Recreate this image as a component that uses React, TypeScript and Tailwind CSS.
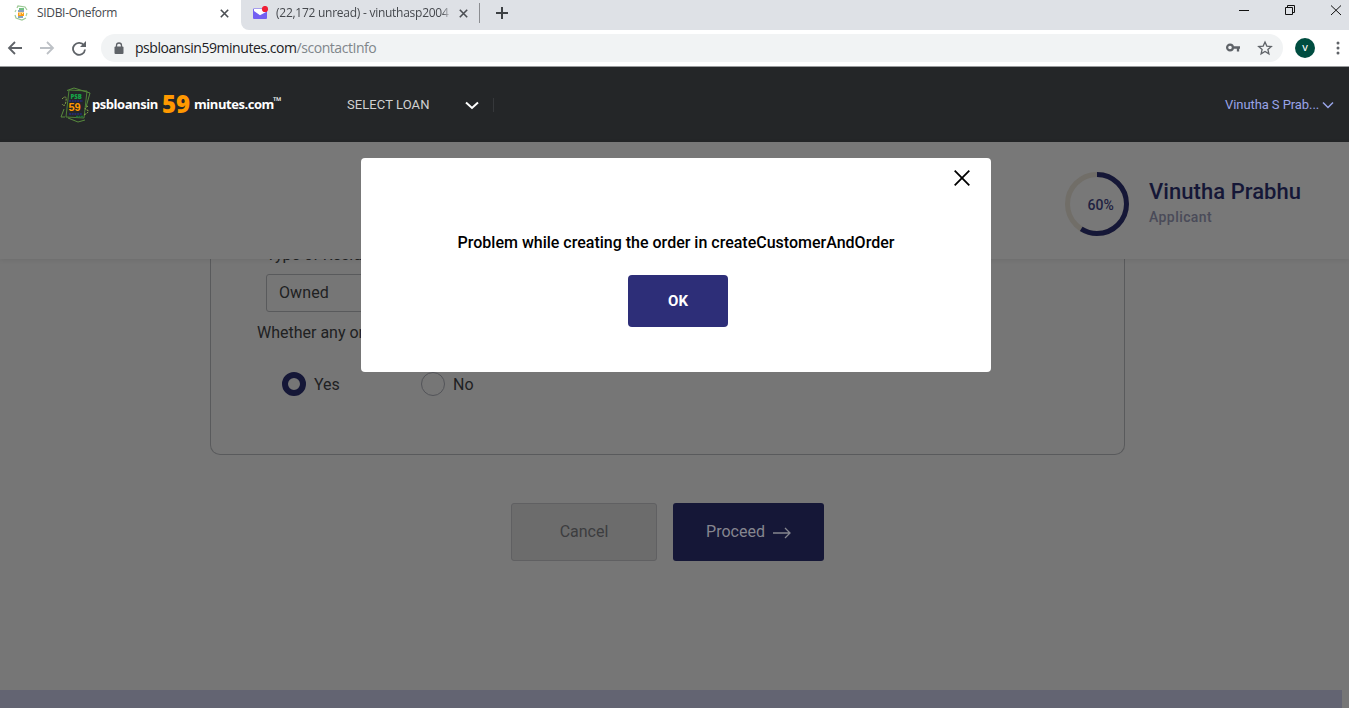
import type { ReactNode } from "react";

const PAGE = "font-['Roboto',sans-serif]";
const CHROME = "font-['Open_Sans','Noto_Sans',sans-serif]";

function NotesIcon({ className }: { className: string }) {
  return (
    <svg viewBox="0 0 32 36" className={className} fill="none">
      <path d="M7 3.500 14 1 30 6 26 20M4 22 1 30 5 30M8 31l10 4 7-2" stroke="#5d963f" strokeWidth=".9" />
      <path d="M9 3 27 4 24 31 6 30Z" stroke="#528a39" strokeWidth=".9" />
      <path d="M2 12q5-5 4 2t-4 3M28 19q-5 3-1 4t-3 5" stroke="#93b64b" strokeDasharray="2 1" />
      <text x="10.500" y="12" fontSize="6" fontWeight="800" fill="#14a447" fontFamily="Open Sans">PSB</text>
      <path d="M9 14h14M9 27h13" stroke="#252a69" strokeWidth="1.800" strokeDasharray="2 .7" />
      <path d="M16 29.500h7" stroke="#196d3b" strokeWidth="1.400" strokeDasharray="2 .5" />
      <text x="8.500" y="24" fontSize="11" fontWeight="700" fill="#ff9800" fontFamily="Liberation Sans">59</text>
    </svg>
  );
}

function SmallFavicon() {
  return (
    <svg width="14" height="16" viewBox="0 0 14 16" fill="none">
      <path d="M3 3 4 1 11 2 13 5M1 10 2 13 8 15 12 13" stroke="#9cc994" strokeWidth="1.2" />
      <path d="M2 5 1 7M13 8l-1 3" stroke="#a7d2a0" strokeWidth="1.2" />
      <path d="M5 4h5" stroke="#45ad5b" strokeWidth="1.5" />
      <path d="M4 6h6M4 12h5" stroke="#5f83a8" strokeWidth="1.3" />
      <path d="M4 7.5h6v3.5H4z" fill="#ff9f14" />
      <path d="M6 8v2M8.5 8v1" stroke="#fff1be" />
    </svg>
  );
}

function CloseMark() {
  return (
    <svg width="9" height="9" viewBox="0 0 9 9" className="shrink-0">
      <path d="M.8.8 8.2 8.2M8.2.8.8 8.2" stroke="#4b4e53" strokeWidth="1.6" />
    </svg>
  );
}

function TabStrip() {
  return (
    <div className="flex h-[30px] bg-[#dee1e6]">
      <div className="flex h-full w-[250px] bg-white">
        <div className="flex h-full w-[241px] items-center pb-1 pl-[14px]">
          <SmallFavicon />
          <span className="ml-[9px] w-[183px] whitespace-nowrap text-[12px] leading-4 tracking-[-0.32px] text-[#45484d]">SIDBI-Oneform</span>
          <CloseMark />
        </div>
      </div>
      <div className="-ml-[9px] flex h-full w-[238px] items-center rounded-bl-[8px] bg-[#dee1e6] pb-1 pl-[12px]">
        <svg width="16" height="14" viewBox="0 0 16 14">
          <rect x="0" y="2.5" width="14" height="10.5" rx="1" fill="#7360f2" />
          <path d="M1 3h10l2 3-6 3.2L1 5z" fill="#fff" />
          <circle cx="12" cy="3" r="3.1" fill="#ef1f35" />
        </svg>
        <span className="ml-[7px] w-[175px] whitespace-nowrap text-[12px] leading-4 tracking-[-0.26px] text-[#45484d] [mask-image:linear-gradient(to_right,black_95%,transparent)]">
          (22,172 unread) - vinuthasp2004
        </span>
        <span className="ml-[8px] flex"><CloseMark /></span>
      </div>
      <div className="mt-[3px] h-[20px] w-px bg-[#8b8d91]" />
      <svg width="12" height="12" viewBox="0 0 12 12" className="ml-[16px] mt-[7px]">
        <path d="M6 0v12M0 6h12" stroke="#3c4043" strokeWidth="2" />
      </svg>
      <svg width="103" height="12" viewBox="0 0 103 12" className="ml-auto mr-[7px] mt-[4px]" fill="none" stroke="#111" strokeWidth="1">
        <path d="M0 6.5h10" />
        <path d="M46.500 3.500h7v7h-7zM48.500 3v-1.500h7v7h-2" />
        <path d="m92 1.500 10 9.500M102 1.500l-10 9.500" />
      </svg>
    </div>
  );
}

function AddressBar() {
  return (
    <div className="flex h-[36px] items-center bg-white pl-[7px]">
      <svg width="82" height="16" viewBox="0 0 82 16" fill="none" strokeWidth="1.8">
        <path d="M15 8H2M8 2 2 8l6 6" stroke="#5f6368" />
        <path d="M33 8h13M40 2l6 6-6 6" stroke="#bdc1c6" />
        <path d="M77 5.500A6 6 0 1 0 78 9.500" stroke="#5f6368" />
        <path d="M79 1v6h-6z" fill="#5f6368" />
      </svg>
      <div className="ml-[12px] flex h-[28px] w-[1182px] items-center rounded-full bg-[#f1f3f4] pl-[13px]">
        <svg width="10" height="13" viewBox="0 0 10 13">
          <path d="M2.500 5V3.500a2.500 2.500 0 0 1 5 0V5" fill="none" stroke="#5f6368" strokeWidth="1.3" />
          <rect x=".5" y="4.500" width="9" height="7.500" rx="1" fill="#5f6368" />
        </svg>
        <span className="ml-[11px] whitespace-nowrap text-[14px] leading-5 tracking-[-0.45px] text-[#202124]">
          psbloansin59minutes.com<span className="text-[#80868b]">/scontactInfo</span>
        </span>
        <svg width="48" height="16" viewBox="0 0 48 16" className="ml-auto mr-[10px]" fill="none">
          <circle cx="5" cy="7.500" r="2.900" stroke="#5f6368" strokeWidth="2.200" />
          <path d="M8 7.500h7M13 7.500v4" stroke="#5f6368" strokeWidth="2.300" />
          <path d="m40 2 1.800 4.100 4.500.4-3.400 3 1 4.300-3.900-2.300-3.900 2.300 1-4.300-3.400-3 4.500-.4z" stroke="#5f6368" strokeWidth="1.300" />
        </svg>
      </div>
      <div className="ml-[12px] flex h-5 w-5 items-center justify-center rounded-full bg-[#004d40] text-[9px] font-semibold text-white">V</div>
      <svg width="4" height="14" viewBox="0 0 4 14" className="ml-[21px]" fill="#5f6368">
        <circle cx="2" cy="2" r="1.500" /><circle cx="2" cy="7" r="1.500" /><circle cx="2" cy="12" r="1.500" />
      </svg>
    </div>
  );
}

function SiteHeader() {
  return (
    <header className="flex h-[75px] items-center bg-[#242628] pl-[60px]">
      <NotesIcon className="h-[36px] w-[32px]" />
      <div className={`${CHROME} flex h-[36px] w-[194px] items-center whitespace-nowrap text-white`}>
        <span className="w-[70px] pt-px text-[13px] font-bold tracking-[-0.45px]">psbloansin</span>
        <span className="w-[32px] pb-[2px] text-[24px] font-extrabold leading-9 text-[#ff9800]">59</span>
        <span className="w-[79px] pt-px text-[13px] font-bold tracking-[-0.45px]">minutes.com</span>
        <span className="mb-[7px] text-[11px] font-semibold leading-3">™</span>
      </div>
      <span className="ml-[61px] w-[118px] whitespace-nowrap text-[13px] leading-5 tracking-[0.08px] text-[#d0d1d2]">SELECT LOAN</span>
      <svg width="14" height="9" viewBox="0 0 14 9" className="mt-[2px]"><path d="m1 1.500 6 5.500 6-5.500" stroke="#fff" strokeWidth="2" fill="none" /></svg>
      <div className="ml-[14px] h-[14px] w-px bg-[#36383b]" />
      <div className="ml-auto mr-[15px] flex items-center">
        <span className="w-[97px] whitespace-nowrap text-[13px] leading-5 tracking-[-0.08px] text-[#99a4e8]">Vinutha S Prab...</span>
        <svg width="12" height="8" viewBox="0 0 12 8"><path d="m1 1.500 5 5 5-5" stroke="#99a4e8" strokeWidth="1.500" fill="none" /></svg>
      </div>
    </header>
  );
}

function ApplicantBar() {
  return (
    <section className="relative z-10 flex h-[117px] justify-end bg-[#787878] pt-[29px] shadow-[0_1px_5px_rgba(0,0,0,0.08)]">
      <svg width="66" height="66" viewBox="0 0 66 66" fill="none" strokeWidth="5">
        <circle cx="33" cy="33" r="29.500" stroke="#716e68" />
        <circle cx="33" cy="33" r="29.500" stroke="#151737" pathLength="100" strokeDasharray="59 41" transform="rotate(-90 33 33)" />
        <text x="23.500" y="39" fontSize="14" fontWeight="500" fill="#202141" stroke="none" letterSpacing=".1">60%</text>
      </svg>
      <div className="ml-[19px] w-[200px] pt-[7px]">
        <div className="text-[22px] font-medium leading-[28px] tracking-[0.06px] text-[#151737]">Vinutha Prabhu</div>
        <div className="text-[14px] font-medium leading-[22px] tracking-[0.42px] text-[#4a4b59]">Applicant</div>
      </div>
    </section>
  );
}

function RadioOption({ checked = false, children }: { checked?: boolean; children: ReactNode }) {
  return (
    <div className="flex h-6 w-[139px] items-center text-[16px]">
      <span className={checked ? "h-6 w-6 rounded-full border-[6px] border-[#151737]" : "h-6 w-6 rounded-full border border-[#535459]"} />
      <span className="ml-2 pt-[2px]">{children}</span>
    </div>
  );
}

function ResidenceForm() {
  return (
    <main className="flex h-[449px] flex-col bg-[#767676] text-[#202122]">
      <div className="ml-[210px] h-[196px] w-[915px] rounded-b-[10px] border border-t-0 border-[#595a5c]">
        <div className="-mt-[14px] ml-[55px] h-[20px] text-[16px] leading-[20px]">Type of Residence</div>
        <div className="ml-[55px] mt-[9px] flex h-[38px] w-[330px] items-center rounded-[3px] border border-[#595a5c] pl-[12px] text-[16px] tracking-[0.1px]">Owned</div>
        <div className="ml-[46px] mt-[9px] text-[16px] leading-6">Whether any ongoing loan</div>
        <div className="ml-[71px] mt-[27px] flex">
          <RadioOption checked>Yes</RadioOption>
          <RadioOption>No</RadioOption>
        </div>
      </div>
      <div className="ml-[511px] mt-[48px] flex gap-4 text-[16px]">
        <button className="h-[58px] w-[146px] rounded-[3px] border border-[#606062] bg-[#6c6c6c] text-[#3c3d3f]">Cancel</button>
        <button className="flex h-[58px] w-[151px] items-center justify-center gap-2 rounded-[3px] bg-[#151737] text-[#85868f]">
          Proceed
          <svg width="18" height="12" viewBox="0 0 18 12" className="mt-[2px]"><path d="M0 6h17M12 1l5 5-5 5" fill="none" stroke="#85868f" strokeWidth="1.300" /></svg>
        </button>
      </div>
      <footer className="mr-[7px] mt-auto h-[18px] bg-[#636472]" />
    </main>
  );
}

function ErrorDialog() {
  return (
    <div role="dialog" aria-modal="true" className="absolute left-[361px] top-[158px] z-20 flex h-[214px] w-[630px] flex-col items-center rounded-[4px] bg-white text-black">
      <button aria-label="Close" className="mr-[21px] mt-[12px] h-4 self-end">
        <svg width="16" height="16" viewBox="0 0 16 16"><path d="m.7.700 14.600 14.600M15.300.700.700 15.300" stroke="#000" strokeWidth="1.800" /></svg>
      </button>
      <p className="mt-[45px] whitespace-nowrap text-[16px] font-medium leading-6">Problem while creating the order in createCustomerAndOrder</p>
      <button className="ml-1 mt-[20px] h-[52px] w-[100px] rounded-[4px] bg-[#2d2e78] text-[15px] font-bold text-white">OK</button>
    </div>
  );
}

export default function App() {
  return (
    <div className={`${PAGE} relative h-[708px] w-[1349px] overflow-hidden`}>
      <div className={CHROME}><TabStrip /><AddressBar /></div>
      <div className="h-px bg-[#989a9c]" />
      <SiteHeader />
      <ApplicantBar />
      <ResidenceForm />
      <ErrorDialog />
    </div>
  );
}
